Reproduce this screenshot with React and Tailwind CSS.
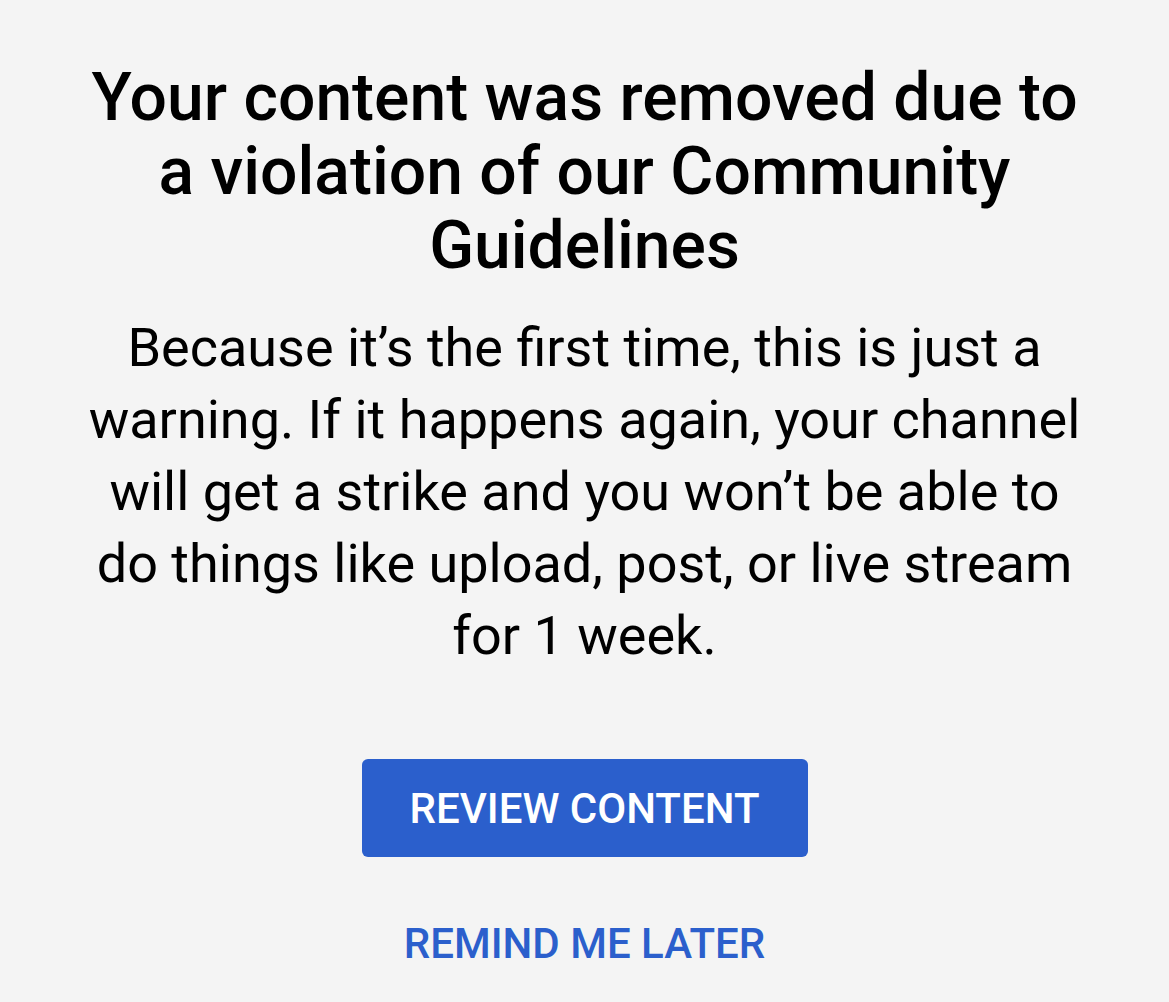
import React from 'react';

const font = { fontFamily: 'Roboto, "Noto Sans", sans-serif' };

export default function App() {
    return (
        <div className="min-h-screen w-full bg-[#f4f4f4] text-black" style={font}>
            <div className="mx-auto flex w-[1000px] flex-col items-center pt-[61px] text-center">
                <h1 className="text-[66px] font-medium leading-[74px]">
                    Your content was removed due to a violation of our Community Guidelines
                </h1>
                <p className="mt-[29px] text-[54px] leading-[72px]">
                    Because it’s the first time, this is just a warning. If it happens again, your channel will get a strike and you won’t be able to do things like upload, post, or live stream for 1 week.
                </p>

                <button className="mt-[87px] h-[98px] w-[446px] rounded-md bg-[#2b5fcc] text-[42px] font-medium text-white">
                    REVIEW CONTENT
                </button>

                <button className="mt-[62px] text-[42px] font-medium leading-[50px] text-[#2b5fcc]">
                    REMIND ME LATER
                </button>
            </div>
        </div>
    );
}
